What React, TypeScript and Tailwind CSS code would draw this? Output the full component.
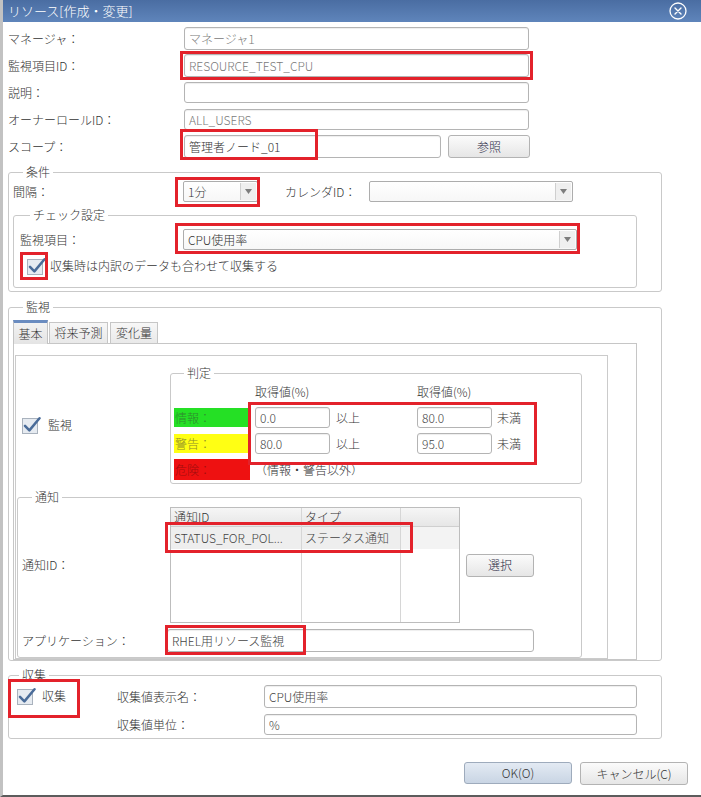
import type { ReactNode } from "react";

const font = "font-['Noto_Sans_CJK_JP','Noto_Sans',sans-serif] font-light";

const Mark = ({ className }: { className: string }) => (
  <span className={`pointer-events-none absolute border-[3px] border-[#e3222b] ${className}`} />
);

const TextBox = ({ value, className = "", muted = false }: { value?: string; className?: string; muted?: boolean }) => (
  <div
    className={`flex items-center rounded-[3px] border border-[#b4b4b4] bg-white pl-[4px] text-[12px] leading-[16px] shadow-[inset_0_1px_1px_rgba(0,0,0,0.07)] ${
      muted ? "text-[#7a7a7a]" : "text-[#333]"
    } ${className}`}
  >
    {value}
  </div>
);

const Select = ({ value, className = "" }: { value?: string; className?: string }) => (
  <div
    className={`flex h-[21px] items-stretch rounded-[2px] border border-[#adadad] bg-gradient-to-b from-white to-[#f7f7f7] text-[12px] leading-[16px] text-[#333] ${className}`}
  >
    <span className="flex flex-1 items-center pl-[4px]">{value}</span>
    <span className="my-[1px] mr-[1px] flex w-[16px] items-center justify-center border-l border-[#cfcfcf] bg-[#efefef]">
      <svg width="7" height="5" viewBox="0 0 7 5">
        <path d="M0 0h7L3.5 5z" fill="#7d7d7d" />
      </svg>
    </span>
  </div>
);

const Check = () => (
  <svg width="19" height="18" viewBox="0 0 19 18" className="shrink-0">
    <rect x="0.5" y="2.5" width="15" height="15" fill="#e6ebf1" stroke="#a9b2bd" />
    <path d="M3 9.8 L7.4 14.4 L17.5 2.2" fill="none" stroke="#4a6c99" strokeWidth="2.5" strokeLinecap="round" strokeLinejoin="round" />
  </svg>
);

const Btn = ({ label, className = "" }: { label: string; className?: string }) => (
  <div
    className={`flex items-center justify-center rounded-[3px] border border-[#b3b3b3] bg-gradient-to-b from-[#fbfbfb] to-[#e6e6e6] text-[12px] leading-[16px] text-[#2a2a44] ${className}`}
  >
    {label}
  </div>
);

const Group = ({ legend, className = "", children }: { legend: string; className?: string; children: ReactNode }) => (
  <fieldset className={`rounded-[3px] border border-[#c9c9c9] ${className}`}>
    <legend className="ml-[10px] px-[3px] text-[12px] leading-[16px] text-[#333]">{legend}</legend>
    {children}
  </fieldset>
);

const Label = ({ text, className = "" }: { text: string; className?: string }) => (
  <span className={`shrink-0 text-[12px] leading-[16px] text-[#333] ${className}`}>{text}</span>
);

const levels = [
  { name: "情報：", bg: "bg-[#25e025]", fg: "text-[#2f8a2f]", from: "0.0", to: "80.0" },
  { name: "警告：", bg: "bg-[#ffff14]", fg: "text-[#8c8c2a]", from: "80.0", to: "95.0" },
];

export default function App() {
  return (
    <div
      className={`flex h-[797px] w-[701px] flex-col overflow-hidden border-b-[2px] border-l-[3px] border-b-[#5c5c5c] border-l-[#c2c2c2] bg-white ${font}`}
    >
      <div className="flex h-[22px] shrink-0 items-center justify-between bg-gradient-to-b from-[#4a6da2] to-[#5f85bb] pl-[5px] pr-[14px]">
        <span className="text-[13px] leading-[18px] text-white">リソース[作成・変更]</span>
        <svg width="18" height="18" viewBox="0 0 18 18">
          <circle cx="9" cy="9" r="8" fill="none" stroke="white" strokeWidth="1.3" />
          <path d="M6 6l6 6M12 6l-6 6" stroke="white" strokeWidth="1.4" strokeLinecap="round" />
        </svg>
      </div>

      <div className="flex flex-1 flex-col pl-[5px]">
        <div className="mt-[5px] flex flex-col gap-[4px]">
          <div className="flex h-[23px] items-center">
            <Label text="マネージャ：" className="w-[176px]" />
            <TextBox muted value="マネージャ1" className="h-[23px] w-[345px]" />
          </div>
          <div className="flex h-[23px] items-center">
            <Label text="監視項目ID：" className="w-[176px]" />
            <div className="relative">
              <TextBox muted value="RESOURCE_TEST_CPU" className="h-[23px] w-[345px]" />
              <Mark className="-bottom-[3px] -left-[4px] -right-[4px] -top-[3px]" />
            </div>
          </div>
          <div className="flex h-[23px] items-center">
            <Label text="説明：" className="w-[176px]" />
            <TextBox className="h-[21px] w-[345px]" />
          </div>
          <div className="flex h-[23px] items-center">
            <Label text="オーナーロールID：" className="w-[176px]" />
            <TextBox muted value="ALL_USERS" className="h-[21px] w-[345px]" />
          </div>
          <div className="flex h-[23px] items-center">
            <Label text="スコープ：" className="w-[176px]" />
            <div className="relative">
              <TextBox value="管理者ノード_01" className="h-[23px] w-[257px]" />
              <Mark className="-left-[4px] -top-[6px] h-[31px] w-[138px]" />
            </div>
            <Btn label="参照" className="ml-[7px] h-[23px] w-[82px]" />
          </div>
        </div>

        <Group legend="条件" className="mt-[6px] w-[654px] pb-[3px] pl-[4px]">
          <div className="mt-[1px] flex h-[21px] items-center">
            <Label text="間隔：" className="w-[170px]" />
            <div className="relative">
              <Select value="1分" className="w-[75px]" />
              <Mark className="-bottom-[5px] -left-[8px] -right-[2px] -top-[4px]" />
            </div>
            <Label text="カレンダID：" className="ml-[27px] w-[84px]" />
            <Select className="w-[204px]" />
          </div>

          <Group legend="チェック設定" className="mt-[5px] w-[624px] pb-[12px] pl-[6px]">
            <div className="mt-[6px] flex h-[21px] items-center">
              <Label text="監視項目：" className="w-[163px]" />
              <div className="relative">
                <Select value="CPU使用率" className="w-[394px]" />
                <Mark className="-bottom-[4px] -left-[8px] -right-[3px] -top-[6px]" />
              </div>
            </div>
            <div className="ml-[7px] mt-[7px] flex h-[18px] items-center">
              <div className="relative">
                <Check />
                <Mark className="-bottom-[5px] -left-[7px] -right-[2px] -top-[5px]" />
              </div>
              <Label text="収集時は内訳のデータも合わせて収集する" className="ml-[4px]" />
            </div>
          </Group>
        </Group>

        <Group legend="監視" className="mt-[7px] w-[654px] pl-[4px]">
          <div className="mt-[5px] flex h-[23px] items-end text-[12px] leading-[16px] text-[#333]">
            <div className="relative z-10 -mb-px flex h-[24px] w-[35px] items-center justify-center border-x border-t-[3px] border-x-[#c3c3c3] border-t-[#6a8cc0] bg-gradient-to-b from-[#f2f2f2] to-[#e4e4e4]">
              基本
            </div>
            <div className="ml-px flex h-[21px] w-[59px] items-center justify-center border-x border-t border-[#c6c6c6] bg-gradient-to-b from-[#f7f7f7] to-[#e9e9e9]">
              将来予測
            </div>
            <div className="ml-[2px] flex h-[21px] w-[48px] items-center justify-center border-x border-t border-[#c6c6c6] bg-gradient-to-b from-[#f7f7f7] to-[#e9e9e9]">
              変化量
            </div>
          </div>

          <div className="w-[624px] border border-[#c6c6c6] bg-white">
            <div className="ml-px mt-[11px] w-[593px] border border-[#cbcbcb]">
              <div className="mt-[9px] flex items-center">
                <div className="flex w-[154px] items-center pl-[6px]">
                  <Check />
                  <Label text="監視" className="ml-[7px]" />
                </div>
                <Group legend="判定" className="w-[412px] pb-[3px] pl-[3px]">
                  <div className="relative text-[12px] leading-[16px] text-[#333]">
                    <div className="mt-[3px] flex h-[16px]">
                      <span className="ml-[81px] w-[162px]">取得値(%)</span>
                      <span>取得値(%)</span>
                    </div>
                    <div className="mt-[7px] flex flex-col gap-[5px]">
                      {levels.map((level) => (
                        <div key={level.name} className="flex h-[21px] items-center">
                          <span className={`flex h-[19px] w-[76px] items-center pl-px ${level.bg} ${level.fg}`}>{level.name}</span>
                          <TextBox value={level.from} className="ml-[5px] h-[21px] w-[75px] text-[#444]" />
                          <span className="ml-[6px] w-[81px]">以上</span>
                          <TextBox value={level.to} className="h-[21px] w-[75px] text-[#444]" />
                          <span className="ml-[5px]">未満</span>
                        </div>
                      ))}
                      <div className="flex h-[21px] items-center">
                        <span className="flex h-[21px] w-[76px] items-center bg-[#ee1111] pl-px text-[#a30d0d]">危険：</span>
                        <span className="ml-[5px]">（情報・警告以外）</span>
                      </div>
                    </div>
                    <Mark className="left-[74px] top-[18px] h-[63px] w-[289px]" />
                  </div>
                </Group>
              </div>

              <Group legend="通知" className="ml-px mt-[5px] w-[565px] pb-[5px] pl-[4px]">
                <div className="mt-[2px] flex items-center">
                  <Label text="通知ID：" className="w-[148px]" />
                  <div className="relative flex h-[116px] w-[290px] border border-[#bdbdbd] text-[12px] leading-[16px] text-[#333]">
                    <div className="flex w-[131px] flex-col border-r border-[#d6d6d6]">
                      <div className="flex h-[19px] items-center border-b border-[#cfcfcf] bg-gradient-to-b from-[#f6f6f6] to-[#e6e6e6] pl-[3px]">通知ID</div>
                      <div className="flex h-[22px] items-center bg-[#eeeeee] pl-[3px] text-[#444]">STATUS_FOR_POL...</div>
                    </div>
                    <div className="flex w-[99px] flex-col border-r border-[#d6d6d6]">
                      <div className="flex h-[19px] items-center border-b border-[#cfcfcf] bg-gradient-to-b from-[#f6f6f6] to-[#e6e6e6] pl-[3px]">タイプ</div>
                      <div className="flex h-[22px] items-center bg-[#eeeeee] pl-[3px] text-[#444]">ステータス通知</div>
                    </div>
                    <div className="flex flex-1 flex-col">
                      <div className="h-[19px] border-b border-[#cfcfcf] bg-gradient-to-b from-[#f6f6f6] to-[#e6e6e6]" />
                      <div className="h-[22px] bg-[#f3f3f3]" />
                    </div>
                    <Mark className="-left-[6px] top-[14px] h-[31px] w-[248px]" />
                  </div>
                  <Btn label="選択" className="ml-[6px] h-[23px] w-[68px]" />
                </div>
                <div className="mt-[6px] flex items-center">
                  <Label text="アプリケーション：" className="w-[145px]" />
                  <div className="relative">
                    <TextBox value="RHEL用リソース監視" className="h-[23px] w-[367px] text-[#444]" />
                    <Mark className="-left-[2px] -top-[4px] h-[30px] w-[141px]" />
                  </div>
                </div>
              </Group>
            </div>
          </div>
        </Group>

        <Group legend="収集" className="mt-[6px] w-[654px] pb-[3px]">
          <div className="flex">
            <div className="relative mt-[3px] flex h-[19px] w-[108px] items-center self-start pl-[8px]">
              <Check />
              <Label text="収集" className="ml-[6px]" />
              <Mark className="-left-[1px] -top-[7px] h-[39px] w-[72px]" />
            </div>
            <div className="mt-[2px] flex flex-col gap-[6px]">
              <div className="flex items-center">
                <Label text="収集値表示名：" className="w-[147px]" />
                <TextBox value="CPU使用率" className="h-[23px] w-[373px] text-[#444]" />
              </div>
              <div className="flex items-center">
                <Label text="収集値単位：" className="w-[147px]" />
                <TextBox value="%" className="h-[21px] w-[373px] text-[#444]" />
              </div>
            </div>
          </div>
        </Group>

        <div className="mt-[23px] flex justify-end gap-[8px] pr-[13px]">
          <div className="flex h-[22px] w-[108px] items-center justify-center rounded-[3px] border border-[#9eabbc] bg-gradient-to-b from-[#e3eaf3] to-[#c9d5e4] text-[12px] leading-[16px] text-[#333]">
            OK(O)
          </div>
          <Btn label="キャンセル(C)" className="h-[23px] w-[108px] text-[#333]" />
        </div>
      </div>
    </div>
  );
}
